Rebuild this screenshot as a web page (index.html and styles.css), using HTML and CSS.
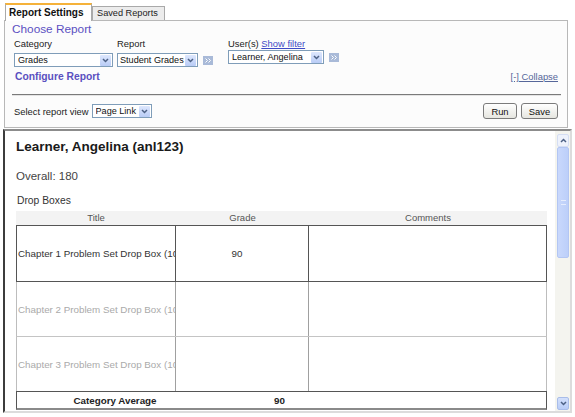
FILE: index.html
```html
<!DOCTYPE html>
<html>
<head>
<meta charset="utf-8">
<title>Report Settings</title>
<link rel="stylesheet" href="styles.css">
</head>
<body>
<div class="tabs">
  <div class="tab active">Report Settings</div>
  <div class="tab saved">Saved Reports</div>
</div>
<div class="panel">
  <div class="choose">Choose Report</div>
  <div class="fields">
    <div class="field f-cat">
      <div class="lbl">Category</div>
      <div class="sel w-cat"><span class="txt">Grades</span><i class="dd"><svg width="7" height="5" viewBox="0 0 7 5"><path d="M1 1l2.5 2.5L6 1" fill="none" stroke="#4d6185" stroke-width="1.5"/></svg></i></div>
    </div>
    <div class="field f-rep">
      <div class="lbl">Report</div>
      <div class="selrow">
        <div class="sel w-rep"><span class="txt">Student Grades</span><i class="dd"><svg width="7" height="5" viewBox="0 0 7 5"><path d="M1 1l2.5 2.5L6 1" fill="none" stroke="#4d6185" stroke-width="1.5"/></svg></i></div>
        <span class="go"><svg width="10" height="9" viewBox="0 0 10 9"><rect width="10" height="9" fill="#a9bad8"/><path d="M2.5 2.5l2 2-2 2M5.5 2.5l2 2-2 2" stroke="#fff" fill="none"/></svg></span>
      </div>
    </div>
    <div class="field f-user">
      <div class="lbl">User(s) <a class="filter">Show filter</a></div>
      <div class="selrow up">
        <div class="sel w-user"><span class="txt">Learner, Angelina</span><i class="dd"><svg width="7" height="5" viewBox="0 0 7 5"><path d="M1 1l2.5 2.5L6 1" fill="none" stroke="#4d6185" stroke-width="1.5"/></svg></i></div>
        <span class="go"><svg width="10" height="9" viewBox="0 0 10 9"><rect width="10" height="9" fill="#a9bad8"/><path d="M2.5 2.5l2 2-2 2M5.5 2.5l2 2-2 2" stroke="#fff" fill="none"/></svg></span>
      </div>
    </div>
  </div>
  <div class="confrow">
    <div class="configure">Configure Report</div>
    <a class="collapse">[-] Collapse</a>
  </div>
  <div class="rule"></div>
  <div class="viewrow">
    <div class="view">
      <span class="vlbl">Select report view</span>
      <div class="sel w-view"><span class="txt">Page Link</span><i class="dd"><svg width="7" height="5" viewBox="0 0 7 5"><path d="M1 1l2.5 2.5L6 1" fill="none" stroke="#4d6185" stroke-width="1.5"/></svg></i></div>
    </div>
    <div class="btns">
      <button class="btn b-run">Run</button>
      <button class="btn b-save">Save</button>
    </div>
  </div>
</div>
<div class="frame">
  <div class="content">
    <h1>Learner, Angelina (anl123)</h1>
    <div class="overall">Overall: 180</div>
    <div class="catname">Drop Boxes</div>
    <div class="tbl">
      <div class="thead"><div>Title</div><div>Grade</div><div>Comments</div></div>
      <div class="row r-sel">
        <div class="c c-title">Chapter 1 Problem Set Drop Box (100)</div>
        <div class="c c-grade">90</div>
        <div class="c"></div>
      </div>
      <div class="row r-dim r2">
        <div class="c c-title">Chapter 2 Problem Set Drop Box (100)</div>
        <div class="c c-grade"></div>
        <div class="c"></div>
      </div>
      <div class="row r-dim r3">
        <div class="c c-title">Chapter 3 Problem Set Drop Box (100)</div>
        <div class="c c-grade"></div>
        <div class="c"></div>
      </div>
      <div class="avg">
        <div>Category Average</div>
        <div>90</div>
        <div></div>
      </div>
    </div>
  </div>
  <div class="scroll">
    <div class="sbtn s-up"><svg width="7" height="5" viewBox="0 0 7 5"><path d="M1 4l2.5-2.5L6 4" fill="none" stroke="#4d6185" stroke-width="1.5"/></svg></div>
    <div class="thumb"><span class="grip"></span></div>
    <div class="track"></div>
    <div class="sbtn s-down"><svg width="7" height="5" viewBox="0 0 7 5"><path d="M1 1l2.5 2.5L6 1" fill="none" stroke="#4d6185" stroke-width="1.5"/></svg></div>
  </div>
</div>
</body>
</html>
```
FILE: styles.css
```css
* { box-sizing: border-box; }
body {
  margin: 0;
  width: 575px;
  height: 417px;
  overflow: hidden;
  background: #fff;
  font-family: "Liberation Sans", Arial, sans-serif;
  color: #000;
}

/* tabs */
.tabs {
  display: flex;
  align-items: flex-end;
  height: 21px;
  padding: 3px 0 0 5px;
  margin-bottom: -1px;
}
.tab {
  border: 1px solid #a9a9a9;
  border-bottom: none;
  white-space: nowrap;
}
.tab.active {
  position: relative;
  z-index: 1;
  width: 87px;
  height: 18px;
  border-top: 2px solid #f5b23a;
  background: #fff;
  font-size: 10px;
  font-weight: bold;
  line-height: 16px;
  padding-left: 3px;
  color: #111;
}
.tab.saved {
  width: 73px;
  height: 14px;
  margin-bottom: 1px;
  background: #ececec;
  font-size: 9.2px;
  line-height: 13px;
  padding-left: 4px;
  color: #222;
}

/* settings panel */
.panel {
  width: 564px;
  margin-left: 4px;
  border: 1px solid #b8b8b8;
  background: #fcfcfc;
  padding: 1px 0 8px 0;
}
.choose {
  margin-left: 7px;
  font-size: 11.8px;
  line-height: 14px;
  color: #5b50c2;
}
.fields {
  display: flex;
  margin: 2px 0 0 9px;
}
.f-cat { width: 103px; }
.f-rep { width: 111px; }
.lbl {
  height: 12px;
  font-size: 9.4px;
  line-height: 12px;
  color: #222;
  white-space: nowrap;
}
.filter {
  color: #3f4ac6;
  text-decoration: underline;
}
.selrow {
  display: flex;
  align-items: center;
  gap: 5px;
}
.sel {
  display: flex;
  align-items: center;
  height: 14px;
  margin-top: 3px;
  border: 1px solid #7f9db9;
  background: #fff;
  padding-left: 3px;
  font-size: 9.1px;
  color: #111;
}
.selrow .sel { margin-top: 3px; }
.selrow.up .sel { margin-top: 0; }
.selrow .go { margin-top: 3px; display: flex; }
.selrow.up .go { margin-top: 0; }
.txt {
  flex: 1;
  white-space: nowrap;
  overflow: hidden;
}
.dd {
  flex: none;
  display: flex;
  align-items: center;
  justify-content: center;
  width: 11px;
  height: 11px;
  margin-right: 1px;
  border-radius: 1px;
  background: linear-gradient(#dde7fd, #b9ccf6);
}
.w-cat { width: 99px; }
.w-rep { width: 81px; padding-left: 2px; }
.w-user { width: 96px; }
.w-view { width: 60px; margin-top: 0; }

.confrow {
  display: flex;
  justify-content: space-between;
  align-items: baseline;
  margin: 3px 9px 0 10px;
}
.configure {
  font-size: 10.3px;
  font-weight: bold;
  line-height: 13px;
  color: #5a50c0;
}
.collapse {
  font-size: 9.4px;
  color: #56679a;
  text-decoration: underline;
}
.rule {
  margin: 11px 6px 0 7px;
  border-top: 1px solid #7a7a7a;
  border-bottom: 1px solid #e4e4e4;
}
.viewrow {
  display: flex;
  justify-content: space-between;
  align-items: center;
  margin: 7px 9px 0 9px;
}
.view {
  display: flex;
  align-items: center;
  gap: 3px;
}
.vlbl {
  font-size: 9.4px;
  color: #222;
}
.btns {
  display: flex;
  gap: 4px;
}
.btn {
  height: 16px;
  padding: 0;
  border: 1px solid #7b7b7b;
  border-radius: 3px;
  background: linear-gradient(#ffffff, #e6e6e0);
  font-family: "Liberation Sans", Arial, sans-serif;
  font-size: 9.4px;
  color: #111;
}
.b-run { width: 34px; }
.b-save { width: 37px; }

/* report frame */
.frame {
  display: flex;
  width: 569px;
  height: 284px;
  margin: 1px 0 0 3px;
  border: 2px solid;
  border-color: #8c8c8c #dcdcdc #dcdcdc #3c3c3c;
  background: #fff;
}
.content {
  flex: 1;
  overflow: hidden;
  padding: 8px 0 0 11px;
}
h1 {
  margin: 0;
  font-size: 13.5px;
  line-height: 16px;
  font-weight: bold;
  color: #1a1a1a;
}
.overall {
  margin-top: 14px;
  font-size: 11.5px;
  line-height: 14px;
  color: #444;
}
.catname {
  margin: 12px 0 0 1px;
  font-size: 10.3px;
  line-height: 12px;
  color: #333;
}
.tbl {
  width: 531px;
  margin-top: 4px;
}
.thead {
  display: grid;
  grid-template-columns: 160px 133px 1fr;
  height: 14px;
  background: #f3f3f3;
  font-size: 9.5px;
  line-height: 14px;
  color: #555;
  text-align: center;
}
.row {
  display: grid;
  grid-template-columns: 159px 133px 1fr;
  font-size: 9.8px;
}
.c {
  display: flex;
  align-items: center;
  overflow: hidden;
  white-space: nowrap;
}
.c-title { padding-left: 1px; }
.c-grade { justify-content: center; padding-right: 10px; }
.r-sel {
  height: 57px;
  border: 1px solid #555;
  color: #333;
}
.r-sel .c-title, .r-sel .c-grade { border-right: 1px solid #555; }
.r-dim {
  border-left: 1px solid #bdbdbd;
  border-right: 1px solid #bdbdbd;
  color: #aaa;
}
.r-dim .c-title, .r-dim .c-grade { border-right: 1px solid #a0a0a0; }
.r2 { height: 55px; border-bottom: 1px solid #c4c4c4; }
.r3 { height: 54px; }
.avg {
  display: grid;
  grid-template-columns: 196px 133px 1fr;
  height: 19px;
  border: 1px solid #555;
  border-bottom: 2px solid #8a8a8a;
  font-size: 9.8px;
  font-weight: bold;
  line-height: 17px;
  color: #222;
  text-align: center;
}

/* scrollbar */
.scroll {
  display: flex;
  flex-direction: column;
  width: 15px;
  padding: 1px 1px 0 2px;
  background: #f4f4ef;
}
.sbtn {
  display: flex;
  align-items: center;
  justify-content: center;
  height: 13px;
  border-radius: 2px;
}
.s-up {
  margin-top: 2px;
  background: #eef2fc;
  border: 1px solid #d5def3;
}
.s-down {
  margin-bottom: 1px;
  background: linear-gradient(#d3e0fc, #b9cdf7);
  border: 1px solid #a9bde9;
}
.thumb {
  display: flex;
  align-items: center;
  justify-content: center;
  height: 111px;
  border: 1px solid #b3c6f3;
  border-radius: 2px;
  background: linear-gradient(90deg, #c9d8fc, #bccff9);
}
.grip {
  width: 5px;
  height: 5px;
  border-top: 1px solid #e6edfe;
  border-bottom: 1px solid #e6edfe;
}
.track { flex: 1; }
```
